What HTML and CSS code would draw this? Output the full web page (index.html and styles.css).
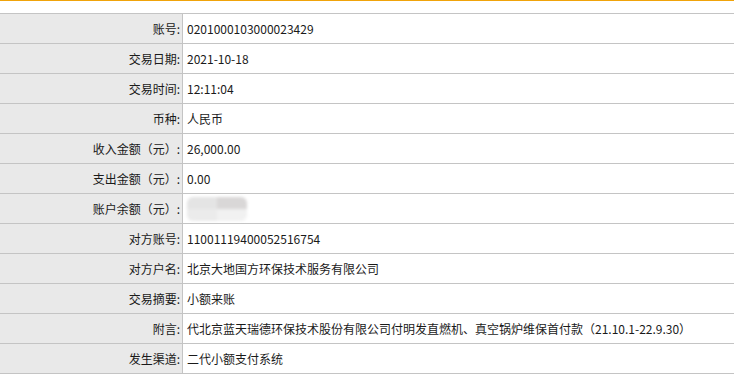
FILE: index.html
```html
<!DOCTYPE html>
<html lang="zh-CN">
<head>
<meta charset="utf-8">
<title>交易明细</title>
<link rel="stylesheet" href="styles.css">
</head>
<body>
<div class="topline"></div>
<table class="detail">
  <tr><td class="lbl">账号:</td><td class="val">0201000103000023429</td></tr>
  <tr><td class="lbl">交易日期:</td><td class="val">2021-10-18</td></tr>
  <tr><td class="lbl">交易时间:</td><td class="val">12:11:04</td></tr>
  <tr><td class="lbl">币种:</td><td class="val">人民币</td></tr>
  <tr><td class="lbl">收入金额（元）:</td><td class="val">26,000.00</td></tr>
  <tr><td class="lbl">支出金额（元）:</td><td class="val">0.00</td></tr>
  <tr><td class="lbl">账户余额（元）:</td><td class="val"><span class="masked"><i class="m1"></i><i class="m2"></i><i class="m3"></i><i class="m4"></i></span></td></tr>
  <tr><td class="lbl">对方账号:</td><td class="val">11001119400052516754</td></tr>
  <tr><td class="lbl">对方户名:</td><td class="val">北京大地国方环保技术服务有限公司</td></tr>
  <tr><td class="lbl">交易摘要:</td><td class="val">小额来账</td></tr>
  <tr><td class="lbl">附言:</td><td class="val">代北京蓝天瑞德环保技术股份有限公司付明发直燃机、真空锅炉维保首付款（21.10.1-22.9.30）</td></tr>
  <tr><td class="lbl">发生渠道:</td><td class="val">二代小额支付系统</td></tr>
</table>
</body>
</html>
```
FILE: styles.css
```css
html, body {
  margin: 0;
  padding: 0;
  background: #ffffff;
}
body {
  font-family: "Noto Sans CJK SC", "Noto Sans", sans-serif;
  font-size: 12px;
  color: #1a1a1a;
}
.topline {
  height: 1px;
  background: #f0a30a;
  margin-bottom: 12px;
}
.detail {
  width: 100%;
  border-collapse: collapse;
}
.detail td {
  height: 29px;
  padding: 0;
  border-top: 1px solid #c4c4c4;
  border-bottom: 1px solid #c4c4c4;
  vertical-align: middle;
  line-height: 16px;
}
.lbl {
  width: 180px;
  background: #e9e9e9;
  text-align: right;
  padding-right: 2px !important;
  border-right: 1px solid #c4c4c4;
  white-space: nowrap;
}
.val {
  padding-left: 4px !important;
  white-space: nowrap;
}
.masked {
  display: inline-flex;
  flex-wrap: wrap;
  width: 60px;
  height: 24px;
  vertical-align: middle;
  filter: blur(1.5px);
  border-radius: 6px;
  overflow: hidden;
}
.masked i {
  display: block;
  width: 30px;
  height: 12px;
}
.m1 { background: #e4e4e4; }
.m2 { background: #d9d7d7; }
.m3 { background: #ebebeb; }
.m4 { background: #f1f1f1; }
```
